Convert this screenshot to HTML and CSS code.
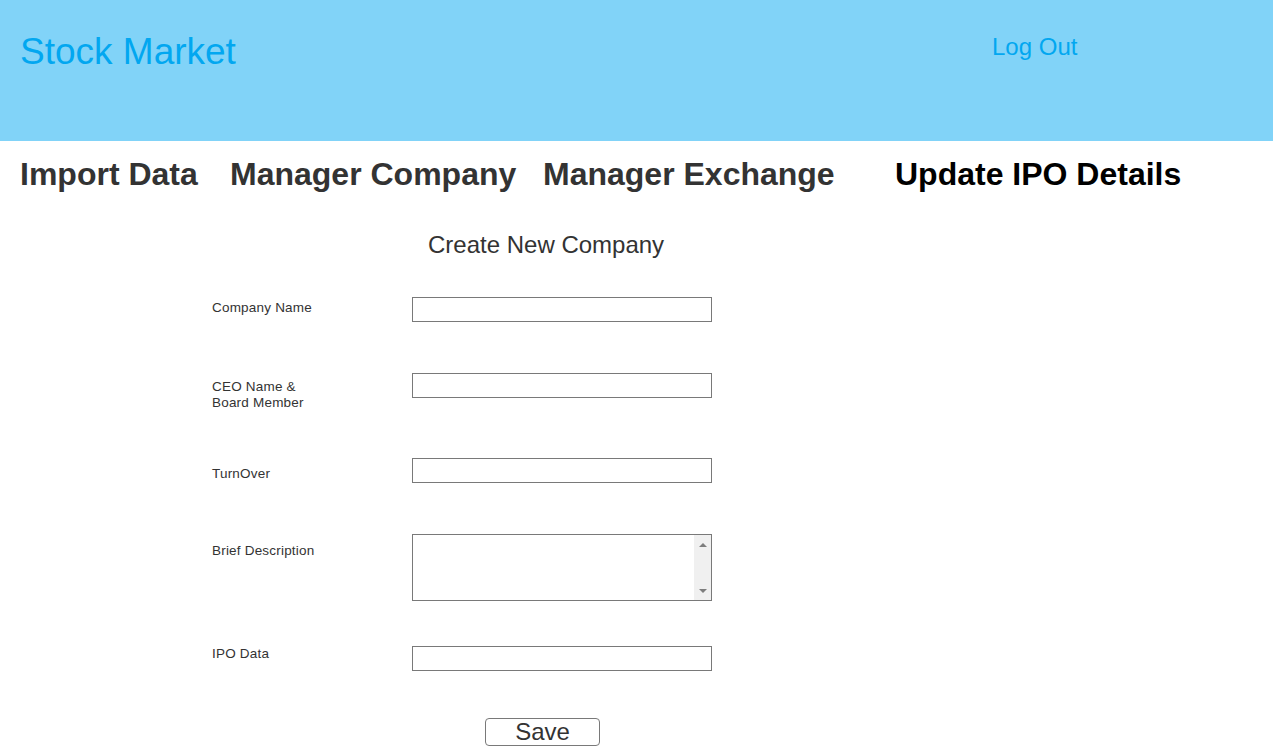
FILE: index.html
```html
<!DOCTYPE html>
<html lang="en">
<head>
<meta charset="utf-8">
<title>Stock Market</title>
<link rel="stylesheet" href="styles.css">
</head>
<body>
<header class="topbar">
  <div class="brand">Stock Market</div>
  <a class="logout" href="#">Log Out</a>
</header>
<nav class="tabs">
  <a class="tab" href="#">Import Data</a>
  <a class="tab" href="#">Manager Company</a>
  <a class="tab" href="#">Manager Exchange</a>
  <a class="tab tab-active" href="#">Update IPO Details</a>
</nav>
<main class="form">
  <h1 class="form-title">Create New Company</h1>
  <div class="row row-name">
    <label class="lbl lbl-name">Company Name</label>
    <input class="field" type="text">
  </div>
  <div class="row row-ceo">
    <label class="lbl lbl-ceo">CEO Name &amp;<br>Board Member</label>
    <input class="field" type="text">
  </div>
  <div class="row row-turnover">
    <label class="lbl lbl-turnover">TurnOver</label>
    <input class="field" type="text">
  </div>
  <div class="row row-desc">
    <label class="lbl lbl-desc">Brief Description</label>
    <div class="area">
      <textarea class="area-text"></textarea>
      <div class="area-scroll">
        <span class="arrow arrow-up"></span>
        <span class="arrow arrow-down"></span>
      </div>
    </div>
  </div>
  <div class="row row-ipo">
    <label class="lbl lbl-ipo">IPO Data</label>
    <input class="field" type="text">
  </div>
  <button class="save" type="button">Save</button>
</main>
</body>
</html>
```
FILE: styles.css
```css
* { box-sizing: border-box; }

body {
  margin: 0;
  font-family: "Liberation Sans", Arial, sans-serif;
  background: #ffffff;
  color: #333333;
}

.topbar {
  height: 141px;
  background: #81d3f8;
  display: grid;
  grid-template-columns: 972px auto;
  align-items: start;
  padding-left: 20px;
}

.brand {
  margin-top: 33px;
  font-size: 37px;
  line-height: 37px;
  color: #02a7f0;
}

.logout {
  margin-top: 35px;
  font-size: 24px;
  line-height: 24px;
  color: #02a7f0;
  text-decoration: none;
  justify-self: start;
}

.tabs {
  display: grid;
  grid-template-columns: 210px 313px 352px auto;
  padding: 17px 0 0 20px;
}

.tab {
  font-size: 32px;
  line-height: 32px;
  font-weight: bold;
  color: #333333;
  text-decoration: none;
  white-space: nowrap;
  justify-self: start;
}

.tab-active { color: #000000; }

.form {
  padding-left: 212px;
  display: flex;
  flex-direction: column;
  align-items: flex-start;
}

.form-title {
  margin: 43px 0 0 216px;
  font-size: 24px;
  line-height: 24px;
  font-weight: normal;
  color: #333333;
}

.row {
  display: grid;
  grid-template-columns: 200px 300px;
  align-items: start;
}

.row-name { margin-top: 40px; }
.row-ceo { margin-top: 51px; }
.row-turnover { margin-top: 47px; }
.row-desc { margin-top: 51px; }
.row-ipo { margin-top: 45px; }

.lbl {
  font-size: 13.5px;
  line-height: 16px;
  letter-spacing: 0.2px;
  color: #333333;
}

.lbl-name { margin-top: 3px; }
.lbl-ceo { margin-top: 6px; }
.lbl-turnover { margin-top: 8px; }
.lbl-desc { margin-top: 9px; }
.lbl-ipo { margin-top: 0; }

.field {
  width: 300px;
  height: 25px;
  margin: 0;
  padding: 0 4px;
  border: 1px solid #797979;
  border-radius: 0;
  background: #ffffff;
  font-family: inherit;
  font-size: 13px;
  outline: none;
}

.area {
  width: 300px;
  height: 67px;
  border: 1px solid #797979;
  display: flex;
  background: #ffffff;
}

.area-text {
  flex: 1;
  border: 0;
  margin: 0;
  padding: 2px 4px;
  resize: none;
  outline: none;
  overflow: hidden;
  font-family: inherit;
  font-size: 13px;
}

.area-scroll {
  width: 17px;
  background: #f0f0f0;
  display: flex;
  flex-direction: column;
  justify-content: space-between;
  align-items: center;
  padding: 8px 0 7px;
}

.arrow {
  width: 0;
  height: 0;
  border-left: 4px solid transparent;
  border-right: 4px solid transparent;
}

.arrow-up { border-bottom: 4px solid #7d7d7d; }
.arrow-down { border-top: 4px solid #7d7d7d; }

.save {
  margin: 47px 0 0 273px;
  width: 115px;
  height: 28px;
  padding: 0;
  border: 1px solid #797979;
  border-radius: 4px;
  background: #ffffff;
  font-family: inherit;
  font-size: 24px;
  line-height: 26px;
  color: #333333;
}
```
